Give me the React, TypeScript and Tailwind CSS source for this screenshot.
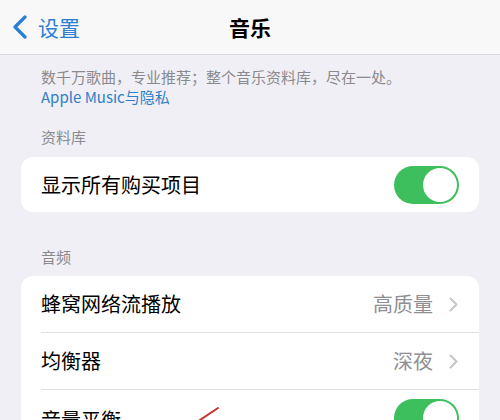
import React from "react";

const font = { fontFamily: '"Noto Sans CJK SC", "Noto Sans", sans-serif' };

function Toggle() {
  return (
    <div className="w-[65px] h-[38px] rounded-full bg-[#3cbf5c] p-[2px] flex justify-end items-center">
      <div className="w-[34px] h-[34px] rounded-full bg-white" />
    </div>
  );
}

function Chevron() {
  return (
    <svg width="9" height="15" viewBox="0 0 9 15" className="ml-[16px]">
      <path d="M1.5 1.5 L7.5 7.5 L1.5 13.5" fill="none" stroke="#c5c5c9" strokeWidth="2" strokeLinecap="round" strokeLinejoin="round" />
    </svg>
  );
}

export default function App() {
  return (
    <div className="w-[500px] h-[420px] overflow-hidden bg-[#f0eff5] relative" style={font}>
      <div className="h-[55px] bg-[#f8f8f9] border-b border-[#d9d9dd] grid grid-cols-[1fr_auto_1fr] items-center">
        <div className="flex items-center pl-[12px]">
          <svg width="16" height="24" viewBox="0 0 16 24">
            <path d="M13 2 L3 12 L13 22" fill="none" stroke="#2a7fd4" strokeWidth="3.2" strokeLinecap="round" strokeLinejoin="round" />
          </svg>
          <span className="ml-[10px] text-[21px] leading-[26px] text-[#2a7fd4]">设置</span>
        </div>
        <div className="text-[21px] leading-[26px] font-bold text-black">音乐</div>
        <div />
      </div>

      <div className="px-[41px] pt-[12px]">
        <div className="text-[15px] leading-[20px] text-[#8a8a8e]">数千万歌曲，专业推荐；整个音乐资料库，尽在一处。</div>
        <div className="text-[15px] leading-[20px] text-[#2f80c8]">Apple Music与隐私</div>
        <div className="mt-[20px] text-[15px] leading-[20px] text-[#8a8a8e]">资料库</div>
      </div>

      <div className="mx-[21px] mt-[10px] h-[55px] rounded-[12px] bg-white flex items-center justify-between pl-[20px] pr-[20px]">
        <span className="text-[20px] leading-[26px] text-black">显示所有购买项目</span>
        <Toggle />
      </div>

      <div className="px-[41px] mt-[35px] text-[15px] leading-[20px] text-[#8a8a8e]">音频</div>

      <div className="mx-[21px] mt-[9px] rounded-[12px] bg-white">
        <div className="h-[56px] flex items-center pl-[20px] pr-[21px]">
          <span className="text-[20px] leading-[26px] text-black flex-1">蜂窝网络流播放</span>
          <span className="text-[20px] leading-[26px] text-[#8e8e93]">高质量</span>
          <Chevron />
        </div>
        <div className="ml-[20px] border-t border-[#e0e0e4]" />
        <div className="h-[56px] flex items-center pl-[20px] pr-[21px]">
          <span className="text-[20px] leading-[26px] text-black flex-1">均衡器</span>
          <span className="text-[20px] leading-[26px] text-[#8e8e93]">深夜</span>
          <Chevron />
        </div>
        <div className="ml-[20px] border-t border-[#e0e0e4]" />
        <div className="h-[56px] flex items-center pl-[20px] pr-[20px]">
          <span className="text-[20px] leading-[26px] text-black flex-1 mt-[4px]">音量平衡</span>
          <Toggle />
        </div>
      </div>

      <svg className="absolute left-[190px] top-[400px]" width="40" height="20" viewBox="0 0 40 20">
        <path d="M28 8 L7 22" stroke="#c8322c" strokeWidth="2" strokeLinecap="round" />
      </svg>
    </div>
  );
}
